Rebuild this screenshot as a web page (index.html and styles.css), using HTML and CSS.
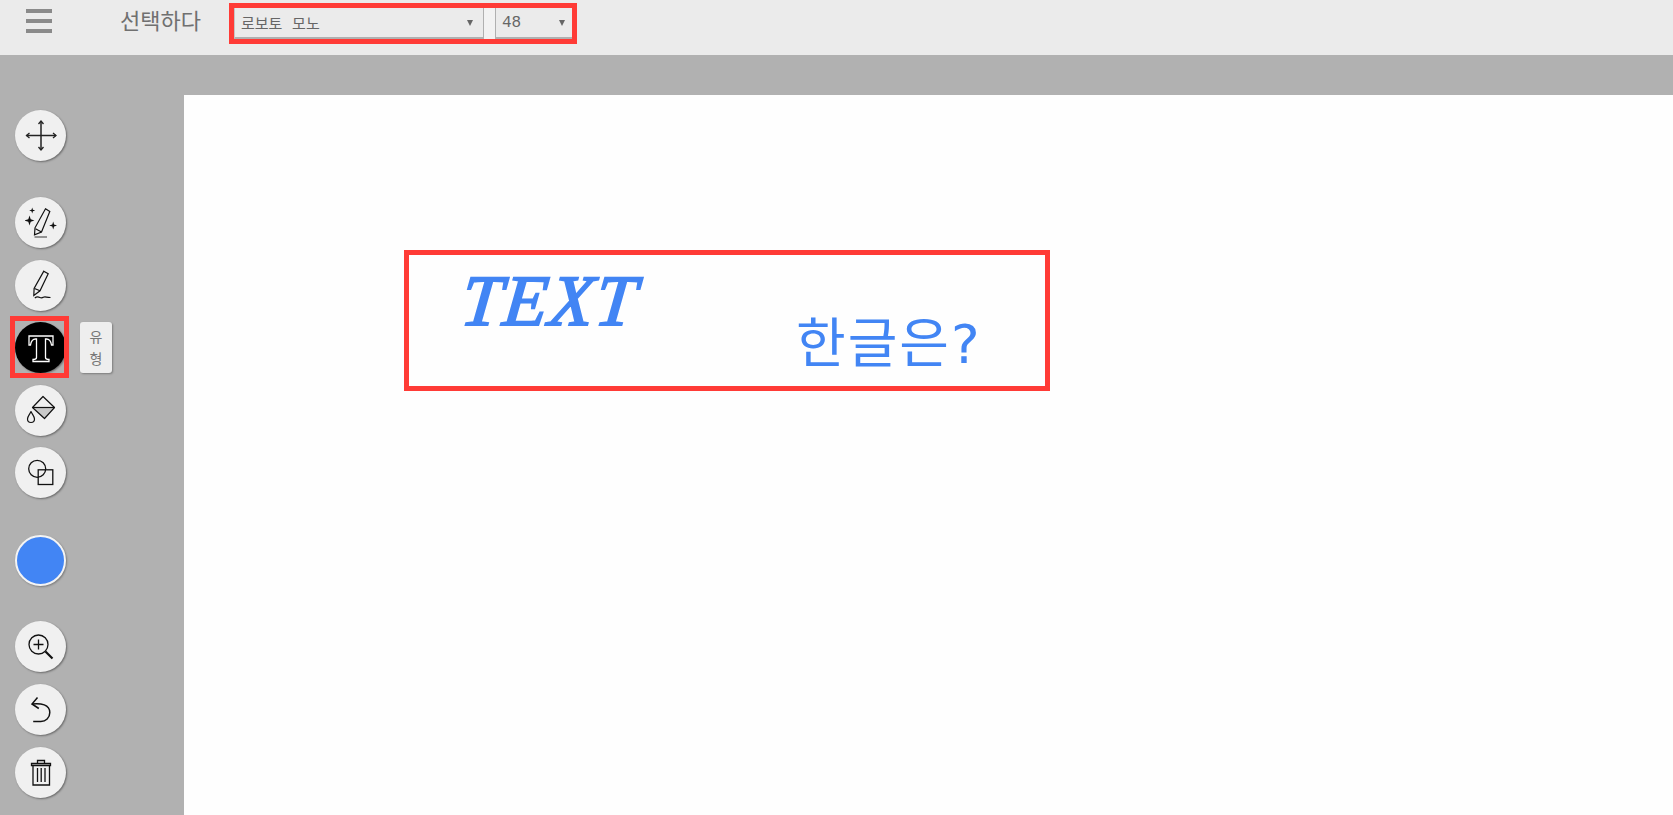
FILE: index.html
```html
<!DOCTYPE html>
<html lang="ko">
<head>
    <meta charset="UTF-8">
    <title>그리기</title>
    <link rel="stylesheet" href="styles.css">
</head>
<body>
    <div class="toolbar">
        <div class="menu-icon"><span></span><span></span><span></span></div>
        <div class="select-label">선택하다</div>
        <div class="font-controls">
            <div class="dropdown font-family"><span>로보토 모노</span><i class="caret"></i></div>
            <div class="spacer"></div>
            <div class="dropdown font-size"><span>48</span><i class="caret"></i></div>
        </div>
    </div>

    <div class="workspace">
        <div class="rail">
            <button class="tool">
                <svg viewBox="0 0 32 32" width="32" height="32" fill="none" stroke="#222" stroke-width="1.3">
                    <path d="M16 1v29M1.500 15.500h29.500" stroke-width="1.500"/>
                    <path d="M13.500 4L16 1l2.500 3M13.500 27L16 30l2.500-3M4.500 13L1.500 15.500l3 2.500M28 13l3 2.500-3 2.500"/>
                </svg>
            </button>

            <div class="tool-group">
                <button class="tool">
                    <svg viewBox="0 0 32 32" width="32" height="32" fill="none" stroke="#111" stroke-width="1.200">
                        <path d="M20.500 1.800l4.300 2.700-8.300 20.500-7 2.800.5-7z"/>
                        <path d="M10.500 21.800l6 3.200"/>
                        <path d="M9.500 30h12.500" stroke="#555"/>
                        <path fill="#111" stroke="none" d="M7.200.5l.7 2.300 2.300.7-2.300.7-.7 2.300-.7-2.300-2.300-.7 2.300-.7zM4.500 8.500l1.200 3.800 3.800 1.200-3.800 1.200-1.200 3.800-1.200-3.800-3.800-1.200 3.800-1.200zM28.200 14.500l.9 3.100 3.100.9-3.100.9-.9 3.100-.9-3.100-3.100-.9 3.100-.9z"/>
                    </svg>
                </button>
                <button class="tool">
                    <svg viewBox="0 0 32 32" width="32" height="32" fill="none" stroke="#111" stroke-width="1.200">
                        <path d="M18.800 2.200l4.400 2.600-8.200 17-6.200 4.700.3-7z"/>
                        <path d="M9.500 19.500l5.500 2.300"/>
                        <path d="M9.800 29c2-1.500 3.500-1.200 5-.5s2.500.5 3.500-.2c1.500-1 2.500 0 7.200.2"/>
                    </svg>
                </button>
                <div class="tool-wrap">
                    <button class="tool active">
                        <svg viewBox="0 0 32 32" width="32" height="32" fill="#000" stroke="#fff" stroke-width="1.300">
                            <path d="M4 4h24v9h-1.500c-.5-3-2-6-5-6H20.500v18.500c0 1.500 1 2 3.500 2v2H8v-2c2.500 0 3.500-.5 3.500-2V7H10.500c-3 0-4.500 3-5 6H4z"/>
                        </svg>
                    </button>
                    <div class="tooltip">유 형</div>
                </div>
                <button class="tool">
                    <svg viewBox="0 0 32 32" width="32" height="32" fill="none" stroke="#111" stroke-width="1.200" stroke-linejoin="round">
                        <path d="M8.500 13.500h20l-9 10c-.5.500-1.500.500-2 0z" fill="#c9c9c9" stroke="none"/>
                        <path d="M18 2.500L29.500 13.500 19.500 24.500 7.500 13.500z"/>
                        <path d="M7.500 13.500h22"/>
                        <path d="M6 17.500c-1.500 3.500-3.500 5-3.500 7.500a3.500 3.500 0 0 0 7 0c0-2.500-2-4-3.500-7.500z"/>
                    </svg>
                </button>
                <button class="tool">
                    <svg viewBox="0 0 32 32" width="32" height="32" fill="none" stroke="#111" stroke-width="1.300">
                        <circle cx="12.200" cy="11.800" r="8.500"/>
                        <rect x="13.200" y="12.800" width="14.600" height="14.700"/>
                    </svg>
                </button>
            </div>

            <button class="color-swatch"></button>

            <div class="tool-group last">
                <button class="tool">
                    <svg viewBox="0 0 32 32" width="32" height="32" fill="none" stroke="#111" stroke-width="1.300">
                        <circle cx="13.500" cy="13.500" r="9.500"/>
                        <path d="M13.500 8.500v10M8.500 13.500h10"/>
                        <path d="M20.500 20.500l7 7" stroke-width="2.200"/>
                    </svg>
                </button>
                <button class="tool">
                    <svg viewBox="0 0 32 32" width="32" height="32" fill="none" stroke="#111" stroke-width="1.500">
                        <path d="M12.500 3.500L7 10l6.800 4.500"/>
                        <path d="M7 10c9-1 17.800 .5 17.800 8.500 0 5.500-4 9-9 9H8.200"/>
                    </svg>
                </button>
                <button class="tool">
                    <svg viewBox="0 0 32 32" width="32" height="32" fill="none" stroke="#111" stroke-width="1.300">
                        <path d="M12.500 6.500V3.500h7v3"/>
                        <path d="M6.500 8.500v-2h19v2z"/>
                        <path d="M8 8.500V28h16.500V8.500"/>
                        <path d="M12.500 11v14M16.200 11v14M20 11v14"/>
                    </svg>
                </button>
            </div>
        </div>

        <div class="canvas">
            <div class="callout"></div>
            <div class="canvas-text latin">TEXT</div>
            <div class="canvas-text hangul">한글은<span class="mark">?</span></div>
        </div>
    </div>
</body>
</html>
```

FILE: styles.css
```css
* {
    box-sizing: border-box;
}

html, body {
    height: 100%;
}

body {
    margin: 0;
    display: flex;
    flex-direction: column;
    overflow: hidden;
    background-color: #b1b1b1;
    font-family: Roboto, "Noto Sans CJK KR", sans-serif;
    color: #666;
}

.toolbar {
    height: 55px;
    flex: none;
    display: flex;
    align-items: flex-start;
    background-color: #ebebeb;
}

.menu-icon {
    width: 26px;
    margin: 9px 0 0 26px;
    display: flex;
    flex-direction: column;
    gap: 6px;
}

.menu-icon span {
    height: 4px;
    background-color: #8a8a8a;
}

.select-label {
    margin: 7px 0 0 68px;
    font-size: 22px;
    line-height: 30px;
    color: #707070;
}

.font-controls {
    margin: 3px 0 0 28px;
    width: 348px;
    height: 41px;
    border: 5px solid #ff3b36;
    display: flex;
}

.dropdown {
    height: 100%;
    display: flex;
    align-items: center;
    justify-content: space-between;
    border-left: 1px solid #c6c6c6;
    border-right: 1px solid #b0b0b0;
    border-bottom: 2px solid #b0b0b0;
    font-size: 15px;
    color: #666;
}

.font-family {
    width: 250px;
    padding: 0 10px 0 6px;
    word-spacing: 6px;
}

.spacer {
    width: 11px;
    background-color: #f2f2f2;
}

.font-size {
    width: 77px;
    padding: 0 7px 0 6px;
    border-left-color: #b0b0b0;
    border-right: 0;
    font-family: "Liberation Mono", monospace;
    font-size: 16px;
}

.caret {
    width: 0;
    height: 0;
    border-left: 3.500px solid transparent;
    border-right: 3.500px solid transparent;
    border-top: 6px solid #666;
}

.workspace {
    flex: 1;
    display: flex;
    min-height: 0;
}

.rail {
    width: 184px;
    flex: none;
    padding: 55px 0 0 15px;
    display: flex;
    flex-direction: column;
    align-items: flex-start;
}

.tool-group {
    margin-top: 36px;
    display: flex;
    flex-direction: column;
    gap: 11.500px;
}

.tool-group.last {
    gap: 12px;
}

.tool {
    width: 51px;
    height: 51px;
    padding: 0;
    display: flex;
    align-items: center;
    justify-content: center;
    border: 0;
    border-radius: 50%;
    background-color: #f0f0f0;
    box-shadow: 1px 1px 2px rgba(0, 0, 0, 0.4);
}

.tool.active {
    background-color: #000;
}

.tool-wrap {
    position: relative;
}

.tool-wrap::after {
    content: "";
    box-sizing: border-box;
    position: absolute;
    left: -5px;
    top: -6px;
    width: 59px;
    height: 62px;
    border: 5px solid #ff3b36;
    pointer-events: none;
}

.tooltip {
    position: absolute;
    left: 65px;
    top: 0;
    width: 32px;
    height: 51px;
    padding: 4px 8px;
    border-radius: 3px;
    background-color: #eee;
    box-shadow: 1px 1px 2px rgba(0, 0, 0, 0.3);
    font-size: 14px;
    line-height: 22px;
    text-align: center;
    color: #777;
}

.color-swatch {
    margin-top: 37px;
    width: 51px;
    height: 51px;
    padding: 0;
    border: 2px solid #f4f4f4;
    border-radius: 50%;
    background-color: #4285f4;
    box-shadow: 1px 1px 2px rgba(0, 0, 0, 0.3);
}

.color-swatch + .tool-group {
    margin-top: 35px;
}

.canvas {
    position: relative;
    flex: 1;
    margin-top: 40px;
    background-color: #fefefe;
}

.callout {
    position: absolute;
    left: 220px;
    top: 155px;
    width: 646px;
    height: 141px;
    border: 5px solid #ff3b36;
}

.canvas-text {
    position: absolute;
    color: #4285f4;
    white-space: nowrap;
}

.latin {
    left: 278px;
    top: 160px;
    font-family: "Liberation Serif", serif;
    font-size: 72px;
    line-height: 92px;
    font-style: italic;
    letter-spacing: 2px;
    -webkit-text-stroke: 2px #4285f4;
    transform: skewX(-6deg);
}

.hangul {
    left: 612px;
    top: 206px;
    font-family: "Noto Sans CJK KR", sans-serif;
    font-size: 54px;
    line-height: 78px;
    letter-spacing: 2px;
}

.mark {
    font-family: "DejaVu Sans", sans-serif;
}
```
